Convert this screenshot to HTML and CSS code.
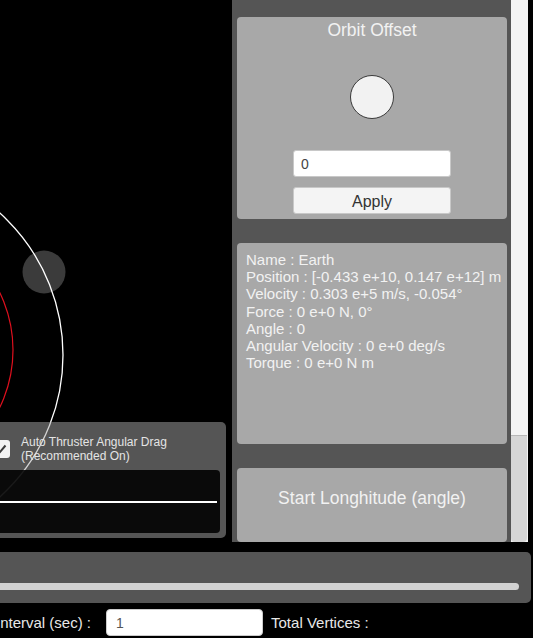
FILE: index.html
```html
<!DOCTYPE html>
<html>

<head>
    <meta charset="utf-8">
    <title>Orbit Simulator</title>
    <link rel="stylesheet" href="styles.css">
</head>

<body>
    <div class="layout">
        <div class="viewport">
            <svg class="space" width="232" height="542" viewBox="0 0 232 542">
                <circle cx="44" cy="272" r="21.5" fill="#3b3b3b" />
                <circle cx="-118" cy="350" r="131" fill="none" stroke="#e0101e" stroke-width="1.2" />
                <circle cx="-128" cy="355" r="191" fill="none" stroke="#ffffff" stroke-width="1.3" />
            </svg>

            <div class="thruster-panel">
                <label class="check-row">
                    <span class="checkbox">
                        <svg width="14" height="14" viewBox="0 0 14 14">
                            <path d="M2.5 7.5 L5.5 10.5 L11.5 3.5" fill="none" stroke="#3a3a3a" stroke-width="2" />
                        </svg>
                    </span>
                    <span class="check-label">Auto Thruster Angular Drag<br>(Recommended On)</span>
                </label>
                <div class="graph">
                    <div class="graph-line"></div>
                </div>
            </div>
        </div>

        <div class="side">
            <div class="card orbit-card">
                <div class="card-title">Orbit Offset</div>
                <div class="knob"></div>
                <input type="text" class="field" value="0">
                <button class="apply">Apply</button>
            </div>

            <div class="card info-card">
                <div>Name : Earth</div>
                <div>Position : [-0.433 e+10, 0.147 e+12] m</div>
                <div>Velocity : 0.303 e+5 m/s, -0.054°</div>
                <div>Force : 0 e+0 N, 0°</div>
                <div>Angle : 0</div>
                <div>Angular Velocity : 0 e+0 deg/s</div>
                <div>Torque : 0 e+0 N m</div>
            </div>

            <div class="card start-card">Start Longhitude (angle)</div>
        </div>

        <div class="scrollbar">
            <div class="thumb"></div>
        </div>
        <div></div>
    </div>

    <div class="timeline">
        <div class="track"></div>
    </div>

    <div class="interval-row">
        <span class="interval-label">Interval (sec) :</span>
        <input type="text" class="interval-input" value="1">
        <span class="vertices">Total Vertices :</span>
    </div>
</body>

</html>
```

FILE: styles.css
```css
body {
    margin: 0;
    background: #000;
    font-family: 'Liberation Sans', Arial, sans-serif;
    width: 533px;
    height: 638px;
    overflow: hidden;
}

.layout {
    display: grid;
    grid-template-columns: 232px 279px 17px 5px;
    height: 542px;
}

.viewport {
    position: relative;
    display: flex;
    flex-direction: column;
    justify-content: flex-end;
    padding-bottom: 4px;
}

.space {
    position: absolute;
    top: 0;
    left: 0;
}

.thruster-panel {
    position: relative;
    width: 226px;
    height: 116px;
    box-sizing: border-box;
    background: rgba(170, 170, 170, 0.5);
    border-radius: 0 5px 5px 0;
    display: flex;
    flex-direction: column;
}

.check-row {
    display: flex;
    align-items: center;
    height: 48px;
    padding-top: 5px;
    box-sizing: border-box;
}

.checkbox {
    width: 18px;
    height: 18px;
    margin-left: -8px;
    background: #f2f2f2;
    border-radius: 3px;
    display: flex;
    align-items: center;
    justify-content: center;
    flex-shrink: 0;
}

.check-label {
    margin-left: 11px;
    font-size: 12px;
    line-height: 14px;
    color: #e4e4e4;
}

.graph {
    width: 220px;
    height: 63px;
    background: rgba(0, 0, 0, 0.88);
    border-radius: 0 4px 4px 0;
    display: flex;
    flex-direction: column;
    justify-content: center;
}

.graph-line {
    width: 217px;
    height: 2px;
    margin-top: 1px;
    background: #fff;
}

.side {
    background: #555;
    padding: 17px 4px 0 5px;
    display: flex;
    flex-direction: column;
    gap: 24px;
    overflow: hidden;
}

.card {
    background: #a8a8a8;
    border-radius: 4px;
    color: #f2f2f2;
    flex-shrink: 0;
}

.orbit-card {
    height: 202px;
    box-sizing: border-box;
    padding-top: 3px;
    display: flex;
    flex-direction: column;
    align-items: center;
}

.card-title {
    font-size: 17.5px;
    line-height: 20px;
}

.knob {
    width: 42px;
    height: 42px;
    margin-top: 35px;
    border: 1.5px solid #3a3a3a;
    border-radius: 50%;
    background: #f2f2f2;
}

.field {
    width: 158px;
    height: 27px;
    box-sizing: border-box;
    margin-top: 31px;
    border: 1px solid #c8c8c8;
    border-radius: 3px;
    padding: 0 7px;
    font-family: 'Liberation Sans', Arial, sans-serif;
    font-size: 14px;
    color: #444;
    background: #fff;
}

.apply {
    width: 158px;
    height: 27px;
    margin-top: 10px;
    border: 1px solid #c8c8c8;
    border-radius: 3px;
    background: #f4f4f4;
    font-family: 'Liberation Sans', Arial, sans-serif;
    font-size: 16px;
    color: #333;
    padding: 2px 0 0;
}

.info-card {
    height: 201px;
    box-sizing: border-box;
    padding: 8px 0 0 9px;
    font-size: 15px;
    line-height: 17.2px;
    white-space: nowrap;
}

.start-card {
    height: 74px;
    box-sizing: border-box;
    padding-top: 20px;
    text-align: center;
    font-size: 17.5px;
    line-height: 20px;
}

.scrollbar {
    background: #f4f4f4;
    display: flex;
    flex-direction: column;
    justify-content: flex-end;
    padding-right: 1px;
}

.thumb {
    height: 106px;
    background: #d6d6d6;
    border-top: 1px solid #b8b8b8;
    border-radius: 0 0 4px 4px;
}

.timeline {
    width: 531px;
    height: 51px;
    margin-top: 10px;
    box-sizing: border-box;
    padding-top: 31px;
    background: #555;
    border-radius: 0 5px 5px 0;
}

.track {
    width: 519px;
    height: 7px;
    background: #d2d2d2;
    border-radius: 0 4px 4px 0;
}

.interval-row {
    display: flex;
    align-items: center;
    height: 35px;
    padding-top: 4px;
    box-sizing: border-box;
    margin-left: -4px;
    font-size: 15px;
    color: #e8e8e8;
}

.interval-input {
    width: 157px;
    height: 27px;
    box-sizing: border-box;
    margin-left: 15px;
    border: 1px solid #ccc;
    border-radius: 4px;
    padding: 0 9px;
    font-family: 'Liberation Sans', Arial, sans-serif;
    font-size: 14px;
    color: #555;
    background: #fff;
}

.vertices {
    margin-left: 8px;
}
```
